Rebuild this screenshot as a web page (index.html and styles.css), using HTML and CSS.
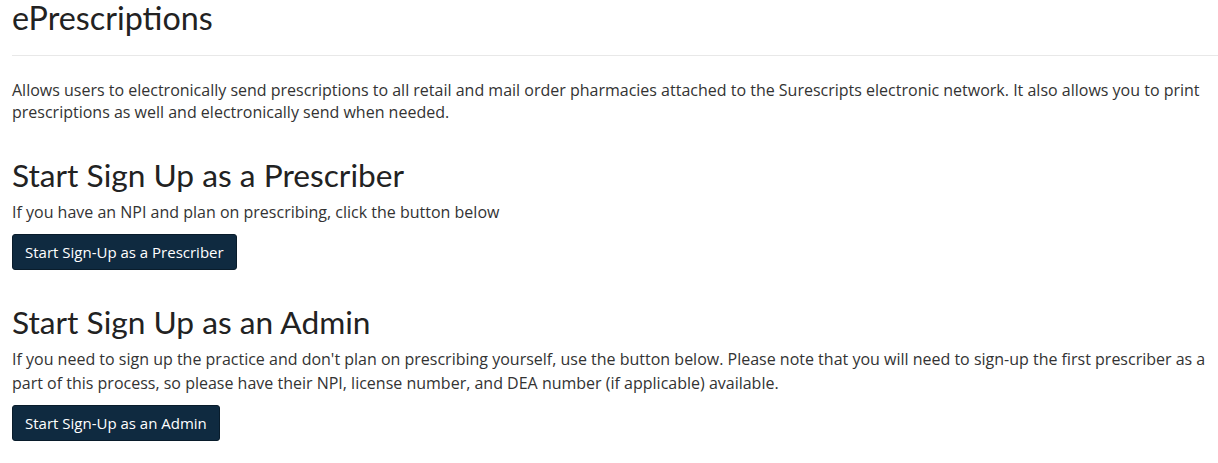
FILE: index.html
```html
<!DOCTYPE html>
<html>
<head>
<meta charset="utf-8">
<link rel="stylesheet" href="styles.css">
</head>
<body>
<div class="page">
  <h1 class="title">ePrescriptions</h1>
  <hr class="rule">
  <p class="intro">Allows users to electronically send prescriptions to all retail and mail order pharmacies attached to the Surescripts electronic network. It also allows you to print prescriptions as well and electronically send when needed.</p>
  <section class="block">
    <h2 class="heading">Start Sign Up as a Prescriber</h2>
    <p class="text">If you have an NPI and plan on prescribing, click the button below</p>
    <button class="btn">Start Sign-Up as a Prescriber</button>
  </section>
  <section class="block">
    <h2 class="heading">Start Sign Up as an Admin</h2>
    <p class="text">If you need to sign up the practice and don't plan on prescribing yourself, use the button below. Please note that you will need to sign-up the first prescriber as a part of this process, so please have their NPI, license number, and DEA number (if applicable) available.</p>
    <button class="btn">Start Sign-Up as an Admin</button>
  </section>
</div>
</body>
</html>
```
FILE: styles.css
```css
html, body {
  margin: 0;
  padding: 0;
  background: #fff;
}
.page {
  padding: 0 0 0 12px;
  font-family: "Open Sans", "Liberation Sans", sans-serif;
  color: #333;
}
.title {
  font-family: Lato, "Open Sans", sans-serif;
  font-weight: 400;
  font-size: 32.3px;
  line-height: 36px;
  color: #222;
  margin: 0;
  padding-top: 0;
}
.rule {
  border: 0;
  border-top: 1px solid #e8e8e8;
  margin: 19px 0 0 0;
}
.intro {
  font-size: 16px;
  line-height: 22px;
  margin: 23px 0 0 0;
}
.block {
  margin-top: 34px;
}
.heading {
  font-family: Lato, "Open Sans", sans-serif;
  font-weight: 400;
  font-size: 31.7px;
  line-height: 36px;
  color: #222;
  margin: 0;
}
.text {
  font-size: 16px;
  line-height: 24px;
  margin: 7px 0 0 0;
}
.btn {
  display: block;
  box-sizing: border-box;
  margin-top: 10px;
  background: #0f2a40;
  color: #fff;
  border: 1px solid #091c2b;
  border-radius: 3px;
  font-family: "Open Sans", "Liberation Sans", sans-serif;
  font-size: 15px;
  height: 36px;
  padding: 0 12px;
}
```
